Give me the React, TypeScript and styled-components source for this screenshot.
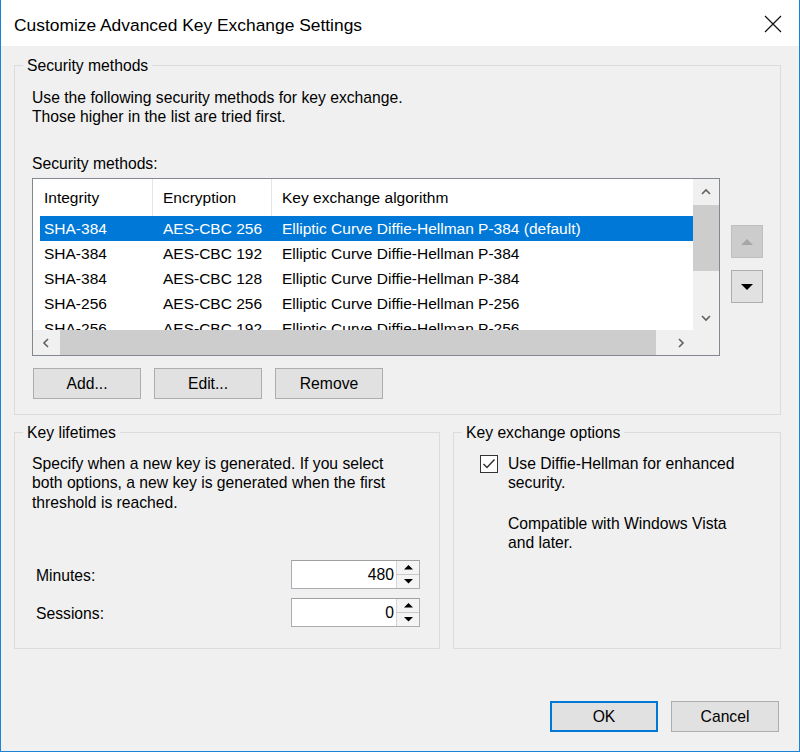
import React from 'react';
import styled, { createGlobalStyle } from 'styled-components';

interface Method {
  integrity: string;
  encryption: string;
  algorithm: string;
}

const methods: Method[] = [
  { integrity: 'SHA-384', encryption: 'AES-CBC 256', algorithm: 'Elliptic Curve Diffie-Hellman P-384 (default)' },
  { integrity: 'SHA-384', encryption: 'AES-CBC 192', algorithm: 'Elliptic Curve Diffie-Hellman P-384' },
  { integrity: 'SHA-384', encryption: 'AES-CBC 128', algorithm: 'Elliptic Curve Diffie-Hellman P-384' },
  { integrity: 'SHA-256', encryption: 'AES-CBC 256', algorithm: 'Elliptic Curve Diffie-Hellman P-256' },
  { integrity: 'SHA-256', encryption: 'AES-CBC 192', algorithm: 'Elliptic Curve Diffie-Hellman P-256' },
];

const Chevron = ({ dir }: { dir: 'up' | 'down' | 'left' | 'right' }) => {
  const pts = {
    up: '1,6 5,2 9,6',
    down: '1,2 5,6 9,2',
    left: '6,1 2,5 6,9',
    right: '2,1 6,5 2,9',
  }[dir];
  const w = dir === 'up' || dir === 'down' ? 10 : 8;
  const h = dir === 'up' || dir === 'down' ? 8 : 10;
  return (
    <svg width={w} height={h} viewBox={`0 0 ${w} ${h}`}>
      <polyline points={pts} fill="none" stroke="#606060" strokeWidth="1.6" />
    </svg>
  );
};

const Triangle = ({ up, color, size }: { up?: boolean; color: string; size: number }) => (
  <svg width={size} height={size / 2} viewBox="0 0 10 5">
    <polygon points={up ? '0,5 5,0 10,5' : '0,0 10,0 5,5'} fill={color} />
  </svg>
);

const App: React.FC = () => {
  return (
    <Window>
      <GlobalStyle />
      <TitleBar>
        <Title>Customize Advanced Key Exchange Settings</Title>
        <CloseIcon width="18" height="18" viewBox="0 0 18 18">
          <path d="M1 1 L17 17 M17 1 L1 17" stroke="#111" strokeWidth="1.2" />
        </CloseIcon>
      </TitleBar>

      <Body>
        <Group $pb={15}>
          <Legend>Security methods</Legend>
          <Text>
            Use the following security methods for key exchange.
            <br />
            Those higher in the list are tried first.
          </Text>
          <FieldLabel>Security methods:</FieldLabel>
          <ListRow>
            <ListBox>
              <ListInner>
                <ListContent>
                  <HeaderRow>
                    <HeaderCell>Integrity</HeaderCell>
                    <HeaderCell>Encryption</HeaderCell>
                    <HeaderCell $last>Key exchange algorithm</HeaderCell>
                  </HeaderRow>
                  {methods.map((m, i) => (
                    <Row key={i} $selected={i === 0}>
                      <Cell $first>{m.integrity}</Cell>
                      <Cell>{m.encryption}</Cell>
                      <Cell>{m.algorithm}</Cell>
                    </Row>
                  ))}
                </ListContent>
                <VScroll>
                  <ScrollArrow>
                    <Chevron dir="up" />
                  </ScrollArrow>
                  <VTrack>
                    <VThumb />
                  </VTrack>
                  <ScrollArrow>
                    <Chevron dir="down" />
                  </ScrollArrow>
                </VScroll>
              </ListInner>
              <HScrollRow>
                <HScroll>
                  <ScrollArrow>
                    <Chevron dir="left" />
                  </ScrollArrow>
                  <HThumb />
                  <ScrollArrow>
                    <Chevron dir="right" />
                  </ScrollArrow>
                </HScroll>
                <Corner />
              </HScrollRow>
            </ListBox>
            <MoveColumn>
              <MoveButton $disabled>
                <Triangle up color="#a6a6a6" size={12} />
              </MoveButton>
              <MoveButton>
                <Triangle color="#000" size={12} />
              </MoveButton>
            </MoveColumn>
          </ListRow>
          <ButtonRow>
            <Button>Add...</Button>
            <Button>Edit...</Button>
            <Button>Remove</Button>
          </ButtonRow>
        </Group>

        <BottomRow>
          <Group $width={426} $height={226} $pt={11}>
            <Legend>Key lifetimes</Legend>
            <Text $width={372}>
              Specify when a new key is generated. If you select both options, a new key is generated when the first
              threshold is reached.
            </Text>
            <Lifetimes>
              <SpinRow>
                <SpinLabel>Minutes:</SpinLabel>
                <Spin>
                  <SpinValue>480</SpinValue>
                  <SpinButtons>
                    <SpinHalf>
                      <Triangle up color="#000" size={9} />
                    </SpinHalf>
                    <SpinHalf $bottom>
                      <Triangle color="#000" size={9} />
                    </SpinHalf>
                  </SpinButtons>
                </Spin>
              </SpinRow>
              <SpinRow>
                <SpinLabel>Sessions:</SpinLabel>
                <Spin>
                  <SpinValue>0</SpinValue>
                  <SpinButtons>
                    <SpinHalf>
                      <Triangle up color="#000" size={9} />
                    </SpinHalf>
                    <SpinHalf $bottom>
                      <Triangle color="#000" size={9} />
                    </SpinHalf>
                  </SpinButtons>
                </Spin>
              </SpinRow>
            </Lifetimes>
          </Group>
          <Group $width={328} $height={226} $pt={11}>
            <Legend>Key exchange options</Legend>
            <CheckRow>
              <CheckBox>
                <svg width="14" height="12" viewBox="0 0 14 12">
                  <polyline points="1.5,6 5,9.5 12.5,1.5" fill="none" stroke="#333" strokeWidth="1.5" />
                </svg>
              </CheckBox>
              <CheckText>
                <div>Use Diffie-Hellman for enhanced security.</div>
                <Note>
                  Compatible with Windows Vista
                  <br />
                  and later.
                </Note>
              </CheckText>
            </CheckRow>
          </Group>
        </BottomRow>

        <Footer>
          <Button $default>OK</Button>
          <Button>Cancel</Button>
        </Footer>
      </Body>
    </Window>
  );
};

export default App;

const GlobalStyle = createGlobalStyle`
  html, body {
    margin: 0;
    padding: 0;
    background: #ffffff;
  }
  body {
    font-family: 'Liberation Sans', Arial, sans-serif;
    font-size: 15.7px;
    line-height: 19.5px;
    color: #000;
  }
  * {
    box-sizing: border-box;
  }
`;

const Window = styled.div`
  width: 800px;
  height: 752px;
  display: flex;
  flex-direction: column;
  border: 1px solid #1883d7;
  border-top: none;
  background: #f0f0f0;
`;

const TitleBar = styled.div`
  height: 46px;
  flex-shrink: 0;
  background: #ffffff;
  display: flex;
  align-items: center;
  justify-content: space-between;
  padding: 0 17px 0 13px;
`;

const Title = styled.div`
  font-size: 17.4px;
  color: #000;
  padding-top: 5px;
`;

const CloseIcon = styled.svg`
  display: block;
  margin-top: 2px;
`;

const Body = styled.div`
  flex: 1;
  display: flex;
  flex-direction: column;
  padding: 10px 18px 19px 13px;
`;

const Group = styled.fieldset<{ $width?: number; $height?: number; $pt?: number; $pb?: number }>`
  margin: 0;
  border: 1px solid #dcdcdc;
  padding: ${(p) => p.$pt ?? 12}px 17px ${(p) => p.$pb ?? 14}px 17px;
  min-width: 0;
  width: ${(p) => (p.$width ? `${p.$width}px` : 'auto')};
  height: ${(p) => (p.$height ? `${p.$height}px` : 'auto')};
`;

const Legend = styled.legend`
  margin-left: -9px;
  padding: 0 4px;
  line-height: 19.5px;
`;

const Text = styled.div<{ $width?: number }>`
  max-width: ${(p) => (p.$width ? `${p.$width}px` : 'none')};
`;

const FieldLabel = styled.div`
  margin-top: 27px;
`;

const ListRow = styled.div`
  display: flex;
  align-items: flex-start;
  gap: 11px;
  margin-top: 5px;
`;

const ListBox = styled.div`
  width: 688px;
  height: 178px;
  border: 1px solid #828790;
  background: #ffffff;
  display: flex;
  flex-direction: column;
`;

const ListInner = styled.div`
  flex: 1;
  display: flex;
  min-height: 0;
`;

const ListContent = styled.div`
  flex: 1;
  overflow: hidden;
  font-size: 15.5px;
`;

const HeaderRow = styled.div`
  height: 37px;
  display: grid;
  grid-template-columns: 120px 119px 1fr;
`;

const HeaderCell = styled.div<{ $last?: boolean }>`
  display: flex;
  align-items: center;
  padding-left: 10px;
  padding-top: 1px;
  border-right: ${(p) => (p.$last ? 'none' : '1px solid #e5e5e5')};
  color: #000;
  &:first-child {
    padding-left: 11px;
  }
`;

const Row = styled.div<{ $selected?: boolean }>`
  height: 25px;
  margin-left: 7px;
  padding-top: 1px;
  display: grid;
  grid-template-columns: 113px 119px 1fr;
  align-items: center;
  background: ${(p) => (p.$selected ? '#0078d7' : 'transparent')};
  color: ${(p) => (p.$selected ? '#ffffff' : '#000')};
  white-space: nowrap;
`;

const Cell = styled.div<{ $first?: boolean }>`
  padding-left: ${(p) => (p.$first ? '4px' : '10px')};
`;

const VScroll = styled.div`
  width: 26px;
  background: #f0f0f0;
  display: flex;
  flex-direction: column;
`;

const ScrollArrow = styled.div`
  width: 25px;
  height: 25px;
  flex-shrink: 0;
  display: flex;
  align-items: center;
  justify-content: center;
`;

const VTrack = styled.div`
  flex: 1;
  padding-top: 1px;
`;

const VThumb = styled.div`
  height: 66px;
  background: #cdcdcd;
`;

const HScrollRow = styled.div`
  height: 25px;
  display: flex;
`;

const HScroll = styled.div`
  flex: 1;
  display: flex;
  background: #f0f0f0;
`;

const HThumb = styled.div`
  flex: 1;
  margin: 0 12px 0 2px;
  background: #cdcdcd;
`;

const Corner = styled.div`
  width: 26px;
  background: #f0f0f0;
`;

const MoveColumn = styled.div`
  display: flex;
  flex-direction: column;
  gap: 12px;
  padding-top: 47px;
`;

const MoveButton = styled.div<{ $disabled?: boolean }>`
  width: 32px;
  height: 33px;
  display: flex;
  align-items: center;
  justify-content: center;
  background: ${(p) => (p.$disabled ? '#cccccc' : '#e1e1e1')};
  border: 1px solid ${(p) => (p.$disabled ? '#bfbfbf' : '#adadad')};
`;

const ButtonRow = styled.div`
  display: flex;
  gap: 13px;
  margin-top: 12px;
  margin-left: 1px;
`;

const Button = styled.div<{ $default?: boolean }>`
  width: 108px;
  height: 31px;
  display: flex;
  align-items: center;
  justify-content: center;
  background: #e1e1e1;
  border: ${(p) => (p.$default ? '2px solid #0078d7' : '1px solid #adadad')};
  color: #000;
`;

const BottomRow = styled.div`
  display: flex;
  justify-content: space-between;
  margin-top: 8px;
`;

const Lifetimes = styled.div`
  display: flex;
  flex-direction: column;
  gap: 9px;
  margin-top: 48px;
`;

const SpinRow = styled.div`
  display: flex;
  align-items: center;
  justify-content: space-between;
  padding: 0 2px 0 4px;
`;

const SpinLabel = styled.div`
  padding-top: 2px;
`;

const Spin = styled.div`
  width: 129px;
  height: 29px;
  display: flex;
  background: #ffffff;
  border: 1px solid #abadb3;
  border-top-color: #a0a0a0;
`;

const SpinValue = styled.div`
  flex: 1;
  display: flex;
  align-items: center;
  justify-content: flex-end;
  padding-right: 2px;
  font-size: 15.7px;
`;

const SpinButtons = styled.div`
  width: 23px;
  display: flex;
  flex-direction: column;
  border-left: 1px solid #d4d4d4;
`;

const SpinHalf = styled.div<{ $bottom?: boolean }>`
  flex: 1;
  display: flex;
  align-items: center;
  justify-content: center;
  background: #f4f4f4;
  border-top: ${(p) => (p.$bottom ? '1px solid #c8c8c8' : 'none')};
`;

const CheckRow = styled.div`
  display: flex;
  align-items: flex-start;
  gap: 10px;
  padding-left: 9px;
`;

const CheckBox = styled.div`
  width: 18px;
  height: 18px;
  margin-top: 1px;
  flex-shrink: 0;
  border: 1px solid #333333;
  background: #ffffff;
  display: flex;
  align-items: center;
  justify-content: center;
`;

const CheckText = styled.div`
  width: 250px;
`;

const Note = styled.div`
  margin-top: 21px;
`;

const Footer = styled.div`
  margin-top: auto;
  display: flex;
  justify-content: flex-end;
  gap: 13px;
  padding-right: 2px;
`;
